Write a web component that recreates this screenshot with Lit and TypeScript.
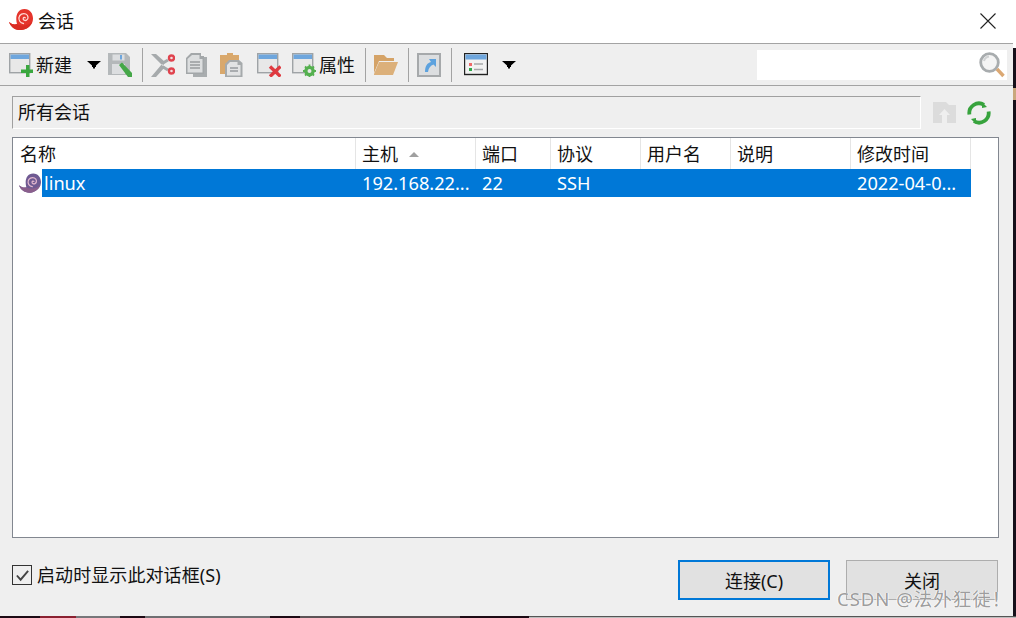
import { LitElement, html, css, svg } from "lit";
import { customElement } from "lit/decorators.js";

const snail = (main: string, dark: string, swirl: string) => svg`
  <path d="M0 13 C3 15.500 6 16 8 15 C6 8 8 0 15.500 0 C21 0 24 4.500 24 9.500 C24 15 20 19 15 20.500 C8 22.500 2 19 0 13 Z" fill="${main}"/>
  <path d="M0 13 C2 19 8 22.500 15 20.500 C19 19.500 22 16.500 23.500 12.500 C20 16.500 13 18 8 15 C6 16 3 15.500 0 13 Z" fill="${dark}"/>
  <path d="M14.500 14.500 C11 14 9.500 11 10 8.500 C10.500 5.500 14 3.800 16.800 5 C19.500 6.200 19.800 10 17.500 11.200 C16 12 14 11 14.200 9.500 C14.400 8.400 15.500 8 16.200 8.800" fill="none" stroke="${swirl}" stroke-width="1.300" stroke-linecap="round"/>`;

const win = (overlay: unknown) => html`<svg class="ico soft" viewBox="0 0 24 24" width="24" height="24">
  <rect x="0.700" y="0.700" width="20" height="19" fill="#e8e8e8" stroke="#9fa3a6" stroke-width="1.400"/>
  <rect x="1.500" y="1.500" width="18.500" height="4.500" fill="#6ea6dd"/>
  ${overlay}
</svg>`;

const plus = svg`<path d="M17 12 h3.500 v4.500 h3.500 v3.500 h-3.500 v4 h-3.500 v-4 h-5 v-3.500 h5 z" fill="#3aa83f"/>`;
const cross = svg`<path d="M13 13.500 L23.500 23.500 M23.500 13.500 L13 23.500" stroke="#df3a40" stroke-width="3.400"/>`;
const gear = svg`<circle cx="17.500" cy="18" r="3.800" fill="none" stroke="#55b04f" stroke-width="3"/>
  <path d="M17.500 11.500 V24.500 M11 18 H24 M13 13.500 L22 22.500 M22 13.500 L13 22.500" stroke="#55b04f" stroke-width="1.800"/>
  <circle cx="17.500" cy="18" r="2" fill="#e8e8e8"/>`;

const arrow = html`<svg class="ico" viewBox="0 0 14 8" width="14" height="8"><path d="M0 0 H14 L9 4.500 V6 H8 V7.500 H6 V6 H5 V4.500 Z" fill="#000"/></svg>`;

const icons = {
  save: html`<svg class="ico soft" viewBox="0 0 24 24" width="24" height="24">
    <path d="M0 0 H18 L22 4 V22 H0 Z" fill="#b4b8ba"/>
    <rect x="4.500" y="1.500" width="12" height="6" fill="#dcdee0"/><rect x="12" y="2" width="2" height="4.500" fill="#6ea6dd"/>
    <rect x="4" y="11" width="13" height="10" fill="#dcdee0"/>
    <path d="M11 12 L14 9.500 L24 20 V24 H20 Z" fill="#45a748"/>
  </svg>`,
  cut: html`<svg class="ico soft" viewBox="0 0 24 24" width="24" height="24">
    <path d="M0 1 L5 1 L14 9 L12 13 Z M0 24 L5 24 L14 14 L11 11 Z" fill="#a6aaac"/>
    <path d="M12 10 L17 7 M12 14 L17 17" stroke="#a6aaac" stroke-width="3"/>
    <circle cx="20.500" cy="5" r="2.500" fill="#f2dfe0" stroke="#e0434e" stroke-width="2.400"/>
    <circle cx="20.500" cy="18" r="2.500" fill="#f2dfe0" stroke="#e0434e" stroke-width="2.400"/>
  </svg>`,
  copy: html`<svg class="ico soft" viewBox="0 0 24 24" width="24" height="24">
    <path d="M7 4 H21 V24 H7 Z" fill="#a9adaf"/>
    <path d="M5 0 H15 V3 H18 V21 H0 V5 Z" fill="#a3a7a9"/>
    <path d="M6 2 H13.500 V6 H16.500 V19.500 H1.500 V6 Z" fill="#dcdedf"/>
    <path d="M4 9 H14 M4 12 H14 M4 15 H14" stroke="#989c9e" stroke-width="1.300"/>
  </svg>`,
  paste: html`<svg class="ico soft" viewBox="0 0 24 24" width="24" height="24">
    <path d="M0 2 H7 V0 H13 V2 H19 V21 H0 Z" fill="#d9a86c"/>
    <path d="M9 7 H19 L22.500 10 V24 H5 V11 Z" fill="#a6aaac"/>
    <path d="M10 9 H17.500 V12 H20.500 V22.500 H7 V12 Z" fill="#e2e3e4"/>
    <path d="M10 15 H18 M10 18 H18" stroke="#989c9e" stroke-width="1.300"/>
  </svg>`,
  folder: html`<svg class="ico soft" viewBox="0 0 24 24" width="24" height="24">
    <path d="M0 2 H10 L13 5 H20 V8 H5 L0 20 Z" fill="#d5a367"/>
    <path d="M0 22 V21 L5 9 H24 L19 22 Z" fill="#dcb07a"/>
  </svg>`,
  share: html`<svg class="ico soft" viewBox="0 0 24 24" width="24" height="24">
    <rect x="1" y="1" width="22" height="22" fill="#dcdee0" stroke="#a6a9ab" stroke-width="2"/>
    <path d="M8 19 C8 13 10 10 14 9 L12 6 H19 V14 L16.500 11.500 C13.500 12.500 11.500 15 11 19 Z" fill="#5da2de"/>
  </svg>`,
  view: html`<svg class="ico" viewBox="0 0 24 24" width="24" height="24">
    <rect x="0.500" y="0.500" width="23" height="21" fill="#f2f2f2" stroke="#222" stroke-width="1.400"/>
    <rect x="1.500" y="1.500" width="21" height="5" fill="#6ea6dd"/>
    <rect x="5" y="10" width="3" height="3" fill="#ef6a6a"/><rect x="5" y="15" width="3" height="3" fill="#2fa84a"/>
    <path d="M10 11 H19 M10 16.500 H19" stroke="#a6a9ab" stroke-width="1.400"/>
  </svg>`,
  search: html`<svg class="ico soft" viewBox="0 0 26 26" width="26" height="26">
    <circle cx="10.500" cy="10.500" r="8.800" fill="#f4f4f4" stroke="#a8acae" stroke-width="2.800"/>
    <path d="M5 9 A6 6 0 0 1 10 4.500" fill="none" stroke="#d0d2d3" stroke-width="2"/>
    <path d="M18 17 L24.500 24" stroke="#dba873" stroke-width="3.400"/>
  </svg>`,
  up: html`<svg class="ico soft" viewBox="0 0 24 24" width="24" height="24">
    <path d="M0 1 H13 L16 4 H23 V22 H0 Z" fill="#dcdcdc"/>
    <path d="M11.500 8 L17 14 H14 V24 H9 V14 H6 Z" fill="#efefef"/>
  </svg>`,
  refresh: html`<svg class="ico soft" viewBox="0 0 24 24" width="24" height="24">
    <path d="M2.400 13.500 A9.700 9.700 0 0 1 17 3.800" fill="none" stroke="#37a33d" stroke-width="3.800"/>
    <path d="M21.600 10.500 A9.700 9.700 0 0 1 7 20.200" fill="none" stroke="#37a33d" stroke-width="3.800"/>
    <path d="M15 1 L20 6 L15 7 Z M9 23 L4 18 L9 17 Z" fill="#37a33d"/>
  </svg>`,
};

const cols = [
  { t: "名称" }, { t: "主机", sort: true }, { t: "端口" }, { t: "协议" },
  { t: "用户名" }, { t: "说明" }, { t: "修改时间" },
];

@customElement("app-root")
export class AppRoot extends LitElement {
  static styles = css`
    :host {
      display: block; width: 1016px; height: 618px; overflow: hidden; position: relative;
      font-family: "Noto Sans", "Noto Sans CJK SC", sans-serif;
      font-size: 18px; color: #111; line-height: 24px;
    }
    .main { display: flex; height: 616px; }
    .win { width: 1013px; display: flex; flex-direction: column; background: #efefef; }
    .edge {
      width: 3px;
      background: linear-gradient(#fff 0 48px, #16101a 48px 88px, #c9a77c 88px 100px, #16101a 100px);
    }
    .strip { display: flex; height: 2px; }
    .strip-l {
      width: 529px;
      background: linear-gradient(90deg, #1c0a14 0 40px, #8a2030 40px 76px, #77777a 76px 120px, #1c0a14 120px 145px,
        #6f6f72 145px 270px, #1c0a14 270px 300px, #5d5457 300px 460px, #1c0a14 460px);
    }
    .strip-r { flex: 1; background: linear-gradient(#555 0 1px, #bdbdbd 1px); }
    .ico { display: block; flex: none; }
    .soft { filter: blur(0.35px); }

    .title {
      height: 43px; box-sizing: content-box; background: #fff; border-bottom: 1px solid #a3a3a3;
      display: flex; align-items: flex-start; padding: 0 17px 0 9px; flex: none;
    }
    .title svg:first-child { margin-top: 9px; }
    .title span { margin: 9px 0 0 5px; }
    .close { margin: 13px 0 0 auto; }

    .toolbar {
      height: 41px; flex: none; border-bottom: 1px solid #a3a3a3;
      display: flex; align-items: center; padding: 0 6px 0 9px;
    }
    .sep { width: 1px; height: 34px; background: #a3a3a3; flex: none; }
    .m3 { margin-left: 3px; } .m7 { margin-left: 7px; } .m8 { margin-left: 8px; }
    .m10 { margin-left: 10px; } .m11 { margin-left: 11px; } .m12 { margin-left: 12px; }
    .m13 { margin-left: 13px; } .m14 { margin-left: 14px; } .m15 { margin-left: 15px; }
    .searchbox {
      margin-left: auto; width: 250px; height: 30px; background: #fff;
      display: flex; align-items: center; justify-content: flex-end; padding-right: 2px; box-sizing: border-box;
    }

    .crumbrow { display: flex; align-items: center; margin: 10px 0 0 12px; height: 33px; flex: none; }
    .crumb {
      width: 909px; height: 33px; box-sizing: border-box;
      border: 1px solid; border-color: #a0a0a0 #fff #fff #a0a0a0;
      padding: 3px 0 0 5px;
    }
    .crumbrow .first { margin-left: 12px; }

    .list {
      margin: 8px 0 0 12px; width: 987px; height: 401px; flex: none; box-sizing: border-box;
      background: #fff; border: 1px solid #828790;
    }
    .grid { display: grid; grid-template-columns: 343px 120px 75px 90px 90px 120px 120px; width: 958px; }
    .head { height: 31px; }
    .hc {
      border-right: 1px solid #e5e5e5; padding: 4px 0 0 6px; box-sizing: border-box;
      display: flex; align-items: flex-start; white-space: nowrap;
    }
    .hc:first-child { padding-left: 7px; }
    .tri { width: 0; height: 0; border: 5.500px solid transparent; border-top: 0; border-bottom: 5px solid #a0a0a0; margin: 10px 0 0 11px; }
    .row { height: 28px; color: #fff; font-size: 18.200px; }
    .cell { background: #0078d7; padding: 2px 0 0 6px; box-sizing: border-box; white-space: nowrap; overflow: hidden; }
    .namecell { display: flex; padding: 0 0 0 6px; }
    .namecell svg { margin-top: 4px; }
    .namecell span { flex: 1; background: #0078d7; padding: 2px 0 0 2px; margin-left: 1px; }
    .namecell.cell { background: #fff; }

    .footer { display: flex; align-items: flex-start; padding: 22px 15px 0 12px; }
    .check { display: flex; align-items: center; gap: 5px; margin-top: 3px; }
    .check span:last-child { letter-spacing: 0.080px; }
    .box {
      width: 20px; height: 20px; box-sizing: border-box; border: 1.500px solid #333;
      display: flex; align-items: center; justify-content: center;
    }
    button {
      width: 152px; height: 40px; box-sizing: border-box; background: #e1e1e1; color: #111;
      border: 1px solid #adadad; font: inherit; padding: 1px 0 0;
    }
    .primary { border: 2px solid #0078d7; margin-left: auto; }
    .secondary { margin-left: 16px; }
    .mark {
      position: absolute; left: 837px; top: 587px; font-size: 18.500px; letter-spacing: 1px;
      color: rgba(130,130,130,.8); white-space: nowrap;
      text-shadow: 0 0 1px #fff, 1px 0 0 rgba(255,255,255,.6), -1px 0 0 rgba(255,255,255,.6);
    }
  `;

  render() {
    return html`
      <div class="main">
        <div class="win">
          <div class="title">
            <svg class="ico" viewBox="0 0 24 21" width="24" height="21">${snail("#e5342b", "#d92c23", "#ffd9d4")}</svg>
            <span>会话</span>
            <svg class="ico close" viewBox="0 0 16 16" width="16" height="16"><path d="M.5 .5 L15.500 15.500 M15.500 .5 L.5 15.500" stroke="#222" stroke-width="1.100"/></svg>
          </div>
          <div class="toolbar">
            ${win(plus)}
            <span class="m3">新建</span>
            <span class="m15">${arrow}</span>
            <span class="m7">${icons.save}</span>
            <div class="sep m10"></div>
            <span class="m8">${icons.cut}</span>
            <span class="m11">${icons.copy}</span>
            <span class="m10">${icons.paste}</span>
            <span class="m13">${win(cross)}</span>
            <span class="m11">${win(gear)}</span>
            <span class="m3">属性</span>
            <div class="sep m10"></div>
            <span class="m8">${icons.folder}</span>
            <div class="sep m10"></div>
            <span class="m8">${icons.share}</span>
            <div class="sep m10"></div>
            <span class="m12">${icons.view}</span>
            <span class="m14">${arrow}</span>
            <div class="searchbox">${icons.search}</div>
          </div>
          <div class="crumbrow">
            <div class="crumb">所有会话</div>
            <span class="first">${icons.up}</span>
            <span class="m10">${icons.refresh}</span>
          </div>
          <div class="list">
            <div class="grid head">
              ${cols.map((c) => html`<div class="hc">${c.t}${c.sort ? html`<i class="tri"></i>` : ""}</div>`)}
            </div>
            <div class="grid row">
              <div class="cell namecell">
                <svg viewBox="0 0 24 21" width="22" height="20">${snail("#6f5a92", "#8a5f8c", "#e5b9cf")}</svg>
                <span>linux</span>
              </div>
              <div class="cell">192.168.22...</div>
              <div class="cell">22</div>
              <div class="cell">SSH</div>
              <div class="cell"></div>
              <div class="cell"></div>
              <div class="cell">2022-04-0...</div>
            </div>
          </div>
          <div class="footer">
            <label class="check">
              <span class="box"><svg viewBox="0 0 16 16" width="15" height="15"><path d="M2 8 L6 12.500 L14 3" fill="none" stroke="#444" stroke-width="2"/></svg></span>
              <span>启动时显示此对话框(S)</span>
            </label>
            <button class="primary">连接(C)</button>
            <button class="secondary">关闭</button>
          </div>
        </div>
        <div class="edge"></div>
      </div>
      <div class="strip"><div class="strip-l"></div><div class="strip-r"></div></div>
      <div class="mark">CSDN @法外狂徒！</div>
    `;
  }
}
